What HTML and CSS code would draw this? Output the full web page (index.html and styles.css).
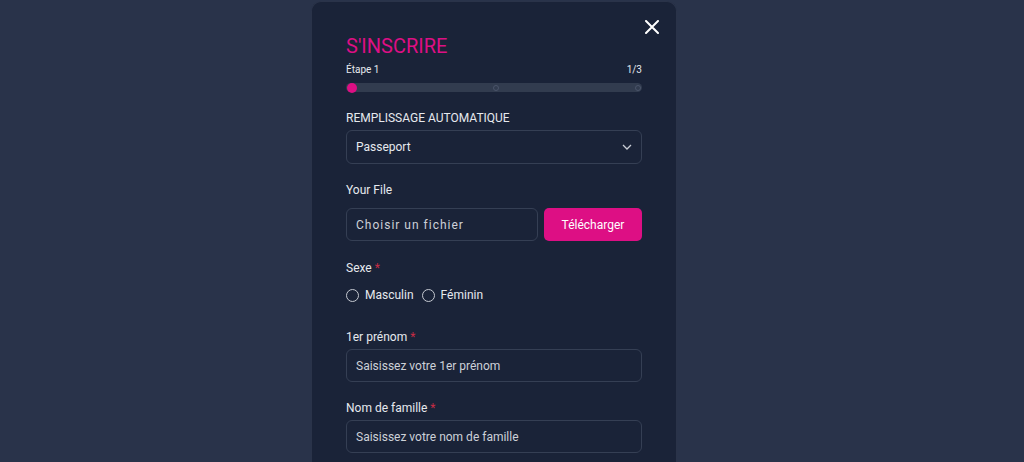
FILE: index.html
```html
<!DOCTYPE html>
<html lang="fr">
<head>
    <meta charset="UTF-8">
    <meta name="viewport" content="width=device-width, initial-scale=1.0">
    <title>S'inscrire</title>
    <link rel="stylesheet" href="styles.css">
</head>
<body>
    <div class="modal">
        <button class="close-button" aria-label="Fermer">
            <svg width="14" height="14" viewBox="0 0 14 14">
                <path d="M1 1 L13 13 M13 1 L1 13" stroke="#ffffff" stroke-width="2" stroke-linecap="round"/>
            </svg>
        </button>

        <h1 class="title">S'INSCRIRE</h1>

        <div class="step-row">
            <span>Étape 1</span>
            <span>1/3</span>
        </div>
        <div class="progress">
            <span class="dot active"></span>
            <span class="dot"></span>
            <span class="dot"></span>
        </div>

        <div class="field">
            <label class="label upper">REMPLISSAGE AUTOMATIQUE</label>
            <div class="select">
                <span>Passeport</span>
                <svg width="10" height="6" viewBox="0 0 10 6">
                    <path d="M1 1 L5 5 L9 1" fill="none" stroke="#c9cdd5" stroke-width="1.3"/>
                </svg>
            </div>
        </div>

        <div class="field field-file">
            <label class="label">Your File</label>
            <div class="file-row">
                <div class="file-input">Choisir un fichier</div>
                <button class="upload-button">Télécharger</button>
            </div>
        </div>

        <div class="field field-sexe">
            <label class="label">Sexe <span class="req">*</span></label>
            <div class="radio-row">
                <label class="radio"><span class="circle"></span>Masculin</label>
                <label class="radio"><span class="circle"></span>Féminin</label>
            </div>
        </div>

        <div class="field field-prenom">
            <label class="label">1er prénom <span class="req">*</span></label>
            <div class="text-input">Saisissez votre 1er prénom</div>
        </div>

        <div class="field">
            <label class="label">Nom de famille <span class="req">*</span></label>
            <div class="text-input">Saisissez votre nom de famille</div>
        </div>
    </div>
</body>
</html>
```

FILE: styles.css
```css
:root {
    --primary-color: #dd0f84;
    --background-color: #29334a;
    --surface-color: #1a2338;
    --border-color: #353f54;
    --text-color: #e6e9ee;
    --muted-color: #cdd1d8;
}

* {
    margin: 0;
    padding: 0;
    box-sizing: border-box;
}

body {
    font-family: 'Roboto', 'Liberation Sans', sans-serif;
    background-color: var(--background-color);
    color: var(--text-color);
    height: 462px;
    overflow: hidden;
    display: flex;
    justify-content: center;
    padding-right: 36px;
}

.modal {
    position: relative;
    width: 366px;
    margin-top: 1px;
    padding: 32px 34px 0 34px;
    background-color: var(--surface-color);
    border: 1px solid #2a3349;
    border-bottom: none;
    border-radius: 10px 10px 0 0;
}

.close-button {
    position: absolute;
    top: 17px;
    right: 16px;
    width: 16px;
    height: 16px;
    display: flex;
    align-items: center;
    justify-content: center;
    background: none;
    border: none;
    cursor: pointer;
}

.title {
    font-size: 20px;
    line-height: 24px;
    font-weight: 400;
    color: var(--primary-color);
}

.step-row {
    margin-top: 6px;
    display: flex;
    justify-content: space-between;
    font-size: 10px;
    line-height: 12px;
    color: var(--text-color);
}

.progress {
    margin-top: 7px;
    height: 9px;
    border-radius: 5px;
    background-color: #323c4f;
    display: flex;
    align-items: center;
    justify-content: space-between;
    padding: 0 1px;
}

.dot {
    width: 6px;
    height: 6px;
    border-radius: 50%;
    border: 1px solid #4a546a;
}

.dot.active {
    width: 10px;
    height: 10px;
    border: none;
    background-color: var(--primary-color);
}

.field {
    margin-top: 19px;
}

.field-sexe {
    margin-top: 20px;
}

.field-prenom {
    margin-top: 28px;
}

.label {
    display: block;
    font-size: 12px;
    line-height: 14px;
    color: var(--text-color);
    margin-bottom: 5px;
}

.field-file .label {
    margin-bottom: 11px;
}

.req {
    color: #c62c45;
}

.select,
.text-input,
.file-input {
    height: 34px;
    border: 1px solid var(--border-color);
    border-radius: 6px;
    display: flex;
    align-items: center;
    padding: 0 9px;
    font-size: 12px;
    color: var(--text-color);
}

.select {
    justify-content: space-between;
}

.text-input {
    height: 33px;
    color: var(--muted-color);
}

.file-row {
    display: flex;
    gap: 6px;
}

.file-input {
    flex: 1;
    height: 33px;
    letter-spacing: 1px;
    color: var(--muted-color);
}

.upload-button {
    width: 98px;
    height: 33px;
    border: none;
    border-radius: 5px;
    background-color: var(--primary-color);
    color: #ffffff;
    font-family: inherit;
    font-size: 12px;
    cursor: pointer;
}

.radio-row {
    margin-top: 13px;
    display: flex;
    gap: 8px;
    font-size: 12px;
    line-height: 14px;
}

.radio {
    display: flex;
    align-items: center;
    gap: 6px;
}

.circle {
    width: 13px;
    height: 13px;
    border-radius: 50%;
    border: 1.3px solid #c5c9d1;
}
```
